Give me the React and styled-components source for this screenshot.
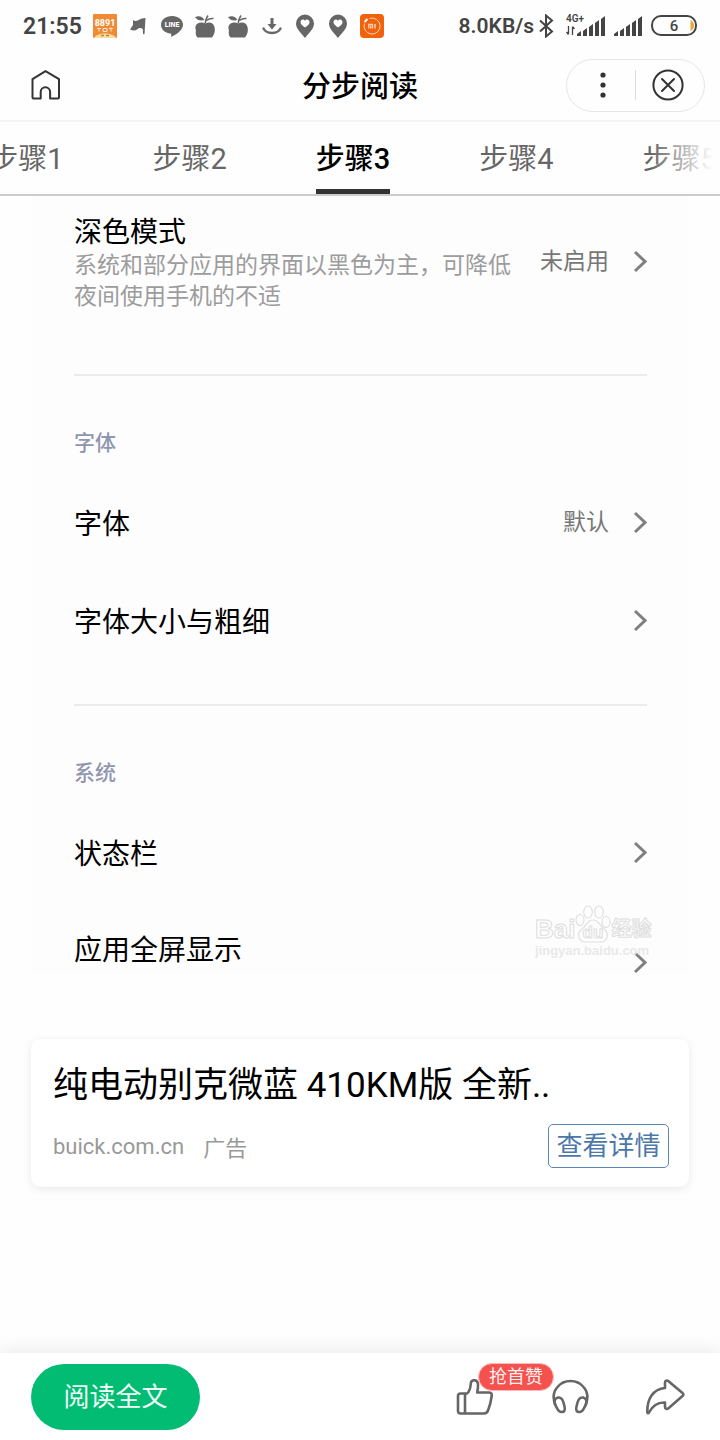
import React from "react";
import styled, { createGlobalStyle } from "styled-components";

const GlobalStyle = createGlobalStyle`
  * {
    box-sizing: border-box;
  }
  body {
    margin: 0;
    background: #fefefe;
    color: #0a0a0a;
    font-family: Roboto, "Noto Sans CJK SC", sans-serif;
  }
  h1, h2, h3, p, ul {
    margin: 0;
    padding: 0;
    font-weight: normal;
  }
  button {
    padding: 0;
    border: none;
    background: none;
    font-family: inherit;
    cursor: pointer;
  }
  svg {
    display: block;
    flex-shrink: 0;
  }
`;

const Page = styled.div`
  min-height: 100vh;
  display: flex;
  flex-direction: column;
`;

const StatusBar = styled.div`
  height: 52px;
  padding: 0 23px;
  display: flex;
  align-items: center;
  justify-content: space-between;
  color: #444444;
  font-size: 23px;
  font-weight: 600;
`;

const StatusGroup = styled.div`
  display: flex;
  align-items: center;
  gap: ${(props) => props.$gap}px;
`;

const Speed = styled.span`
  font-size: 21px;
`;

const Notifications = styled.div`
  width: 291px;
  display: flex;
  align-items: center;
  justify-content: space-between;
`;

const Header = styled.header`
  height: 70px;
  padding: 0 15px 2px 31px;
  display: grid;
  grid-template-columns: 1fr auto 1fr;
  align-items: center;
  border-bottom: 2px solid #f4f4f4;
`;

const HomeButton = styled.button`
  justify-self: start;
`;

const HeaderTitle = styled.h1`
  padding: 4px 16px 0 0;
  font-size: 29px;
  line-height: 40px;
  font-weight: 500;
  color: #000;
`;

const Capsule = styled.div`
  justify-self: end;
  width: 139px;
  height: 53px;
  display: flex;
  align-items: center;
  border: 1px solid #e6e6e6;
  border-radius: 27px;
`;

const CapsuleButton = styled.button`
  flex: 1;
  height: 30px;
  padding-left: 4px;
  display: flex;
  align-items: center;
  justify-content: center;
  & + & {
    padding: 0 4px 0 0;
    border-left: 1px solid #dcdcdc;
  }
`;

const Tabs = styled.nav`
  position: relative;
  height: 74px;
  padding-right: 14px;
  display: flex;
  justify-content: center;
  gap: 89px;
  overflow: hidden;
  border-bottom: 2px solid #cccccc;
  &::after {
    content: "";
    position: absolute;
    top: 0;
    right: 0;
    bottom: 0;
    width: 70px;
    background: linear-gradient(to right, rgba(254, 254, 254, 0), #fefefe 90%);
  }
`;

const Tab = styled.a`
  flex-shrink: 0;
  padding-top: 17px;
  font-size: 29px;
  line-height: 40px;
  font-weight: ${(props) => (props.$active ? 500 : 400)};
  color: ${(props) => (props.$active ? "#000" : "#666")};
  border-bottom: ${(props) => (props.$active ? "5px solid #333" : "none")};
  text-decoration: none;
`;

const Settings = styled.main`
  position: relative;
  margin: 0 32px;
  padding: 0 41px 0 42px;
  background: #fdfdfd;
`;

const Section = styled.section`
  padding: ${(props) => props.$padding};
  & + & {
    border-top: 2px solid #ececec;
  }
`;

const SectionLabel = styled.h2`
  margin-bottom: 16px;
  font-size: 21px;
  line-height: 30px;
  font-weight: 500;
  color: #9196b0;
`;

const Row = styled.div`
  min-height: ${(props) => props.$height || 98}px;
  display: flex;
  align-items: center;
  gap: 24px;
`;

const RowText = styled.div`
  flex: 1;
`;

const RowTitle = styled.h3`
  padding-top: 4px;
  font-size: 28px;
  line-height: 34px;
  color: #000;
`;

const RowDesc = styled.p`
  font-size: 23px;
  line-height: 31px;
  color: #9c9c9c;
`;

const RowValue = styled.span`
  font-size: 23px;
  line-height: 32px;
  color: #777777;
`;

const CutRow = styled.div`
  height: 72px;
  overflow: hidden;
  ${RowText} {
    align-self: flex-start;
    padding-top: 28px;
  }
`;

const Watermark = styled.div`
  position: absolute;
  right: 33px;
  bottom: 15px;
  width: 120px;
  color: #fdfdfd;
  font-family: "Liberation Sans", "Noto Sans CJK SC", sans-serif;
  font-weight: bold;
  -webkit-text-stroke: 1px #dedede;
`;

const WatermarkLogo = styled.div`
  display: flex;
  align-items: flex-end;
  font-size: 26px;
  line-height: 28px;
`;

const WatermarkCn = styled.span`
  font-size: 20px;
`;

const WatermarkUrl = styled.div`
  font-size: 13px;
  line-height: 16px;
  color: #e9e9e9;
  -webkit-text-stroke: 0;
`;

const AdCard = styled.aside`
  margin: 65px 31px 60px;
  padding: 24px 20px 19px 22px;
  display: grid;
  row-gap: 15px;
  border-radius: 10px;
  background: #fff;
  box-shadow: 0 2px 10px rgba(0, 0, 0, 0.09);
`;

const AdTitle = styled.h2`
  font-size: 35px;
  line-height: 46px;
  color: #000;
`;

const AdFooter = styled.div`
  display: flex;
  align-items: center;
  gap: 19px;
  font-size: 22px;
  color: #999999;
`;

const AdButton = styled.button`
  width: 121px;
  height: 44px;
  margin-left: auto;
  border: 1px solid #5c86b4;
  border-radius: 5px;
  color: #4c78a9;
  font-size: 26px;
  line-height: 42px;
`;

const BottomBar = styled.footer`
  height: 87px;
  margin-top: auto;
  padding: 0 35px 0 31px;
  display: flex;
  align-items: center;
  background: #fff;
  box-shadow: 0 -4px 16px rgba(0, 0, 0, 0.07);
`;

const ReadButton = styled.button`
  width: 169px;
  height: 66px;
  border-radius: 33px;
  background: #02bc74;
  color: #effff7;
  font-size: 26px;
  line-height: 36px;
`;

const Actions = styled.div`
  margin-left: auto;
  display: flex;
  gap: 55px;
`;

const ActionButton = styled.button`
  position: relative;
  width: 40px;
  height: 40px;
`;

const Badge = styled.span`
  position: absolute;
  left: 23px;
  top: -14px;
  padding: 0 10px;
  border: 1px solid #fbb;
  border-radius: 14px;
  background: #f4514f;
  color: #fff0f0;
  font-size: 18px;
  line-height: 26px;
  white-space: nowrap;
`;

const AppIcon = () => (
  <svg width="24" height="24" viewBox="0 0 24 24">
    <rect width="24" height="24" rx="1" fill="#f08a35" />
    <path d="M1 24c3-6 19-6 22 0z" fill="#f8dc9d" />
    <text x="12" y="12" textAnchor="middle" fontSize="9" fontWeight="700" fill="#fff">
      8891
    </text>
    <path
      d="M4 14.500h4M6 14.500v3M10 14.500h4v3h-4zM16 14.500h4M18 13.500v4"
      stroke="#ffe6cf"
      strokeWidth="1"
      fill="none"
    />
    <path d="M8 21.500h3M13 21.500h3" stroke="#a08d55" strokeWidth="1.500" />
  </svg>
);

const FlagIcon = () => (
  <svg width="24" height="24" viewBox="0 0 24 24" fill="#666">
    <path d="M7 6q2.500 1.800 5.500 0T19.500 4L18.500 20l-1.400.2-.3-5.200q-3-2-5.500.2T4 15.500l3-4.500z" />
  </svg>
);

const LineIcon = () => (
  <svg width="24" height="24" viewBox="0 0 24 24">
    <path
      d="M12 2C5.800 2 1 5.800 1 10.800c0 4.600 4 8.200 9.500 8.800.9.200.8.800.6 3.400 4.500-2.200 11.900-6.500 11.900-12.200C23 5.800 18.200 2 12 2z"
      fill="#666"
    />
    <text x="12" y="13" textAnchor="middle" fontSize="7" fontWeight="800" fill="#fff">
      LINE
    </text>
  </svg>
);

const AppleIcon = () => (
  <svg width="24" height="24" viewBox="0 0 24 24" fill="#666">
    <path d="M12.500 9.500C9 7.500 3.500 8 2.500 12.500c-.5 2 .8 3.500.3 5.500-.3 2 .2 4 1.700 5.500h14.500c2.500-3 3.500-7 2.500-10.500-1.200-4.500-5.500-5.500-9-3.500z" />
    <path d="M2 3c4-1.800 7.500-.8 9.500 3-3.500 1-7.500.5-9.500-3z" />
    <path d="M12.500 9.500q-.5-3 2.500-8M13.500 6.500q3-2.500 7-2" stroke="#666" strokeWidth="1.500" fill="none" />
  </svg>
);

const DownloadIcon = () => (
  <svg width="24" height="24" viewBox="0 0 24 24" fill="none" stroke="#666" strokeWidth="2.400">
    <path d="M12 4v8" strokeWidth="3" />
    <path d="M7.500 10h9L12 15.500z" fill="#666" stroke="none" />
    <path d="M3.500 14.500c3 6 14 6 17 0" strokeLinecap="round" />
  </svg>
);

const PinIcon = () => (
  <svg width="24" height="24" viewBox="0 0 24 24">
    <path d="M12 .5a9 9 0 0 0-9 9C3 15 8.500 19 12 24c3.500-5 9-9 9-14.500a9 9 0 0 0-9-9z" fill="#666" />
    <path d="M12 13.500C9 11.500 7.500 10 7.500 8c0-2.800 3.300-3.500 4.500-1.300C13.200 4.500 16.500 5.200 16.500 8c0 2-1.500 3.500-4.500 5.500z" fill="#fff" />
  </svg>
);

const MiIcon = () => (
  <svg width="24" height="24" viewBox="0 0 24 24" fill="none" stroke="#ffd9bf">
    <rect width="24" height="24" rx="4" fill="#f2610c" stroke="none" />
    <path d="M9.500 4.500A8 8 0 1 1 4.500 9.500" strokeWidth="1" />
    <path d="M4.500 8L7.500 5" stroke="#fff" strokeWidth="2" />
    <path d="M8.800 14.500v-4h3.700v4M10.700 12v2.500M15 10v4.500" strokeWidth="1.300" />
  </svg>
);

const BluetoothIcon = () => (
  <svg width="16" height="24" viewBox="0 0 16 24" fill="none" stroke="#444" strokeWidth="2">
    <path d="M2 6.500l12 11-6 5V1.500l6 5-12 11" />
  </svg>
);

const bars = [5, 8, 12, 16, 20];

const SignalIcon = ({ label }) => (
  <svg
    width={label ? 39 : 28}
    height="24"
    viewBox={label ? "-11 0 39 24" : "0 0 28 24"}
    fill="#444"
  >
    {bars.map((height, index) => (
      <path key={height} d={`M${index * 6} 22v${3 - height}l4-3V22z`} />
    ))}
    {label && (
      <>
        <text x="-11" y="8" fontSize="10" fontWeight="600">
          {label}
        </text>
        <path
          d="M-8.500 12v8M-10.500 18l2 2.500M-4.500 21v-8M-4.500 12.500l2 2.500"
          stroke="#444"
          strokeWidth="1.300"
        />
      </>
    )}
  </svg>
);

const BatteryIcon = () => (
  <svg width="46" height="24" viewBox="0 0 46 24">
    <rect x="1" y="2" width="44" height="19" rx="9" fill="none" stroke="#444" strokeWidth="2" />
    <path d="M39.500 6q3.500 2 3.500 5.500t-3.500 5.500z" fill="#e5a93c" />
    <text x="23" y="17" textAnchor="middle" fontSize="15" fontWeight="500" fill="#444">
      6
    </text>
  </svg>
);

const HomeIcon = () => (
  <svg width="30" height="30" viewBox="0 0 30 30" fill="none" stroke="#333" strokeWidth="2" strokeLinejoin="round">
    <path d="M14.500 1.200L1.500 9.200V27.500q0 1 1 1H9.700V22a4.700 4.700 0 0 1 9.400 0v6.500H27q1 0 1-1V9.200z" />
  </svg>
);

const MoreIcon = () => (
  <svg width="8" height="28" viewBox="0 0 8 28" fill="#333">
    <circle cx="4" cy="4" r="2.600" />
    <circle cx="4" cy="14" r="2.600" />
    <circle cx="4" cy="24" r="2.600" />
  </svg>
);

const CloseIcon = () => (
  <svg width="32" height="32" viewBox="0 0 32 32" fill="none" stroke="#333" strokeWidth="2" strokeLinecap="round">
    <circle cx="16" cy="16" r="14.600" />
    <path d="M10 10l12 12M22 10L10 22" />
  </svg>
);

const Chevron = () => (
  <svg width="14" height="24" viewBox="0 0 14 24" fill="none" stroke="#808080" strokeWidth="3">
    <path d="M2 2l10 9.500L2 21" />
  </svg>
);

const PawIcon = () => (
  <svg width="36" height="38" viewBox="0 0 36 38" fill="#fdfdfd" stroke="#dfdfdf" strokeWidth="1.200">
    <ellipse cx="5" cy="15" rx="4" ry="5.500" />
    <ellipse cx="13" cy="7" rx="4.300" ry="6" />
    <ellipse cx="24" cy="7" rx="4.300" ry="6" />
    <ellipse cx="31" cy="17" rx="4" ry="5.500" />
    <path d="M18 15c-6 0-7 6-11 9-6 5-3 13 3 13h16c6 0 9-8 3-13-4-3-5-9-11-9z" />
    <text x="18" y="33" textAnchor="middle" fontSize="17" strokeWidth="1">
      du
    </text>
  </svg>
);

const LikeIcon = () => (
  <svg width="40" height="40" viewBox="0 0 40 40" fill="none" stroke="#666" strokeWidth="2.600" strokeLinejoin="round">
    <path d="M5.500 16.500H12c3-2 3.500-6 3.800-10 .2-4.500 6.800-4.500 7.200.5.100 3-.2 6-.8 8.500H34c2.500 0 3 1.500 2.700 3.500-.7 5-1.500 9-3.500 14-.8 2.200-2 3.500-4 3.500H5.500q-2.500 0-2.500-2.500V19q0-2.500 2.500-2.500z" />
    <path d="M10 16.500V37" />
  </svg>
);

const HeadphoneIcon = () => (
  <svg width="40" height="40" viewBox="0 0 40 40" fill="none" stroke="#666" strokeWidth="2.600">
    <path d="M5.500 28C2 20 4 14 7.500 10c6.500-8 19.500-8 26 0 3.500 4 5.500 10 2 18" />
    <path d="M5 27.500c-1.500-4 .5-6.500 3-7 3-.5 4.500 1.500 5.500 5l1 4c1 4-.5 5.500-2.500 5.500-2 .2-3.500-1-4.500-3zM36 27.500c1.500-4-.5-6.500-3-7-3-.5-4.500 1.500-5.500 5l-1 4c-1 4 .5 5.500 2.500 5.500 2 .2 3.500-1 4.500-3z" />
  </svg>
);

const ShareIcon = () => (
  <svg width="40" height="40" viewBox="0 0 40 40" fill="none" stroke="#666" strokeWidth="2.600" strokeLinejoin="round">
    <path d="M20 11V5.500c0-2 2-2.500 3.500-1.200L37.500 16c1.200 1 1.200 2 0 3L23.500 31.200c-1.500 1.200-3.500.8-3.500-1.200V25.500C12 25 7.500 29 4 35.500c-.8 1.200-1.700.8-1.700-.5C2 22 8 12 20 11z" />
  </svg>
);

const notifications = [
  AppIcon,
  FlagIcon,
  LineIcon,
  AppleIcon,
  AppleIcon,
  DownloadIcon,
  PinIcon,
  PinIcon,
  MiIcon,
];

const steps = ["步骤1", "步骤2", "步骤3", "步骤4", "步骤5"];

const SettingRow = ({ title, desc, value, height }) => (
  <Row $height={height}>
    <RowText>
      <RowTitle>{title}</RowTitle>
      {desc && <RowDesc>{desc}</RowDesc>}
    </RowText>
    {value && <RowValue>{value}</RowValue>}
    <Chevron />
  </Row>
);

export default () => {
  return (
    <Page>
      <GlobalStyle />
      <StatusBar>
        <StatusGroup $gap={11}>
          <span>21:55</span>
          <Notifications>
            {notifications.map((Icon, index) => (
              <Icon key={index} />
            ))}
          </Notifications>
        </StatusGroup>
        <StatusGroup $gap={9}>
          <StatusGroup $gap={12}>
            <StatusGroup $gap={4}>
              <Speed>8.0KB/s</Speed>
              <BluetoothIcon />
            </StatusGroup>
            <SignalIcon label="4G+" />
          </StatusGroup>
          <SignalIcon />
          <BatteryIcon />
        </StatusGroup>
      </StatusBar>

      <Header>
        <HomeButton aria-label="首页">
          <HomeIcon />
        </HomeButton>
        <HeaderTitle>分步阅读</HeaderTitle>
        <Capsule>
          <CapsuleButton aria-label="更多">
            <MoreIcon />
          </CapsuleButton>
          <CapsuleButton aria-label="关闭">
            <CloseIcon />
          </CapsuleButton>
        </Capsule>
      </Header>

      <Tabs>
        {steps.map((step, index) => (
          <Tab key={step} href={`#step${index + 1}`} $active={index === 2}>
            {step}
          </Tab>
        ))}
      </Tabs>

      <Settings>
        <Section $padding="16px 0 62px">
          <SettingRow
            title="深色模式"
            desc="系统和部分应用的界面以黑色为主，可降低夜间使用手机的不适"
            value="未启用"
          />
        </Section>
        <Section $padding="52px 0 34px">
          <SectionLabel>字体</SectionLabel>
          <SettingRow title="字体" value="默认" />
          <SettingRow title="字体大小与粗细" />
        </Section>
        <Section $padding="52px 0 0">
          <SectionLabel>系统</SectionLabel>
          <SettingRow title="状态栏" />
          <CutRow>
            <SettingRow title="应用全屏显示" height={122} />
          </CutRow>
        </Section>
        <Watermark>
          <WatermarkLogo>
            Bai
            <PawIcon />
            <WatermarkCn>经验</WatermarkCn>
          </WatermarkLogo>
          <WatermarkUrl>jingyan.baidu.com</WatermarkUrl>
        </Watermark>
      </Settings>

      <AdCard>
        <AdTitle>纯电动别克微蓝 410KM版 全新..</AdTitle>
        <AdFooter>
          <span>buick.com.cn</span>
          <span>广告</span>
          <AdButton>查看详情</AdButton>
        </AdFooter>
      </AdCard>

      <BottomBar>
        <ReadButton>阅读全文</ReadButton>
        <Actions>
          <ActionButton aria-label="点赞">
            <LikeIcon />
            <Badge>抢首赞</Badge>
          </ActionButton>
          <ActionButton aria-label="收听">
            <HeadphoneIcon />
          </ActionButton>
          <ActionButton aria-label="分享">
            <ShareIcon />
          </ActionButton>
        </Actions>
      </BottomBar>
    </Page>
  );
};
